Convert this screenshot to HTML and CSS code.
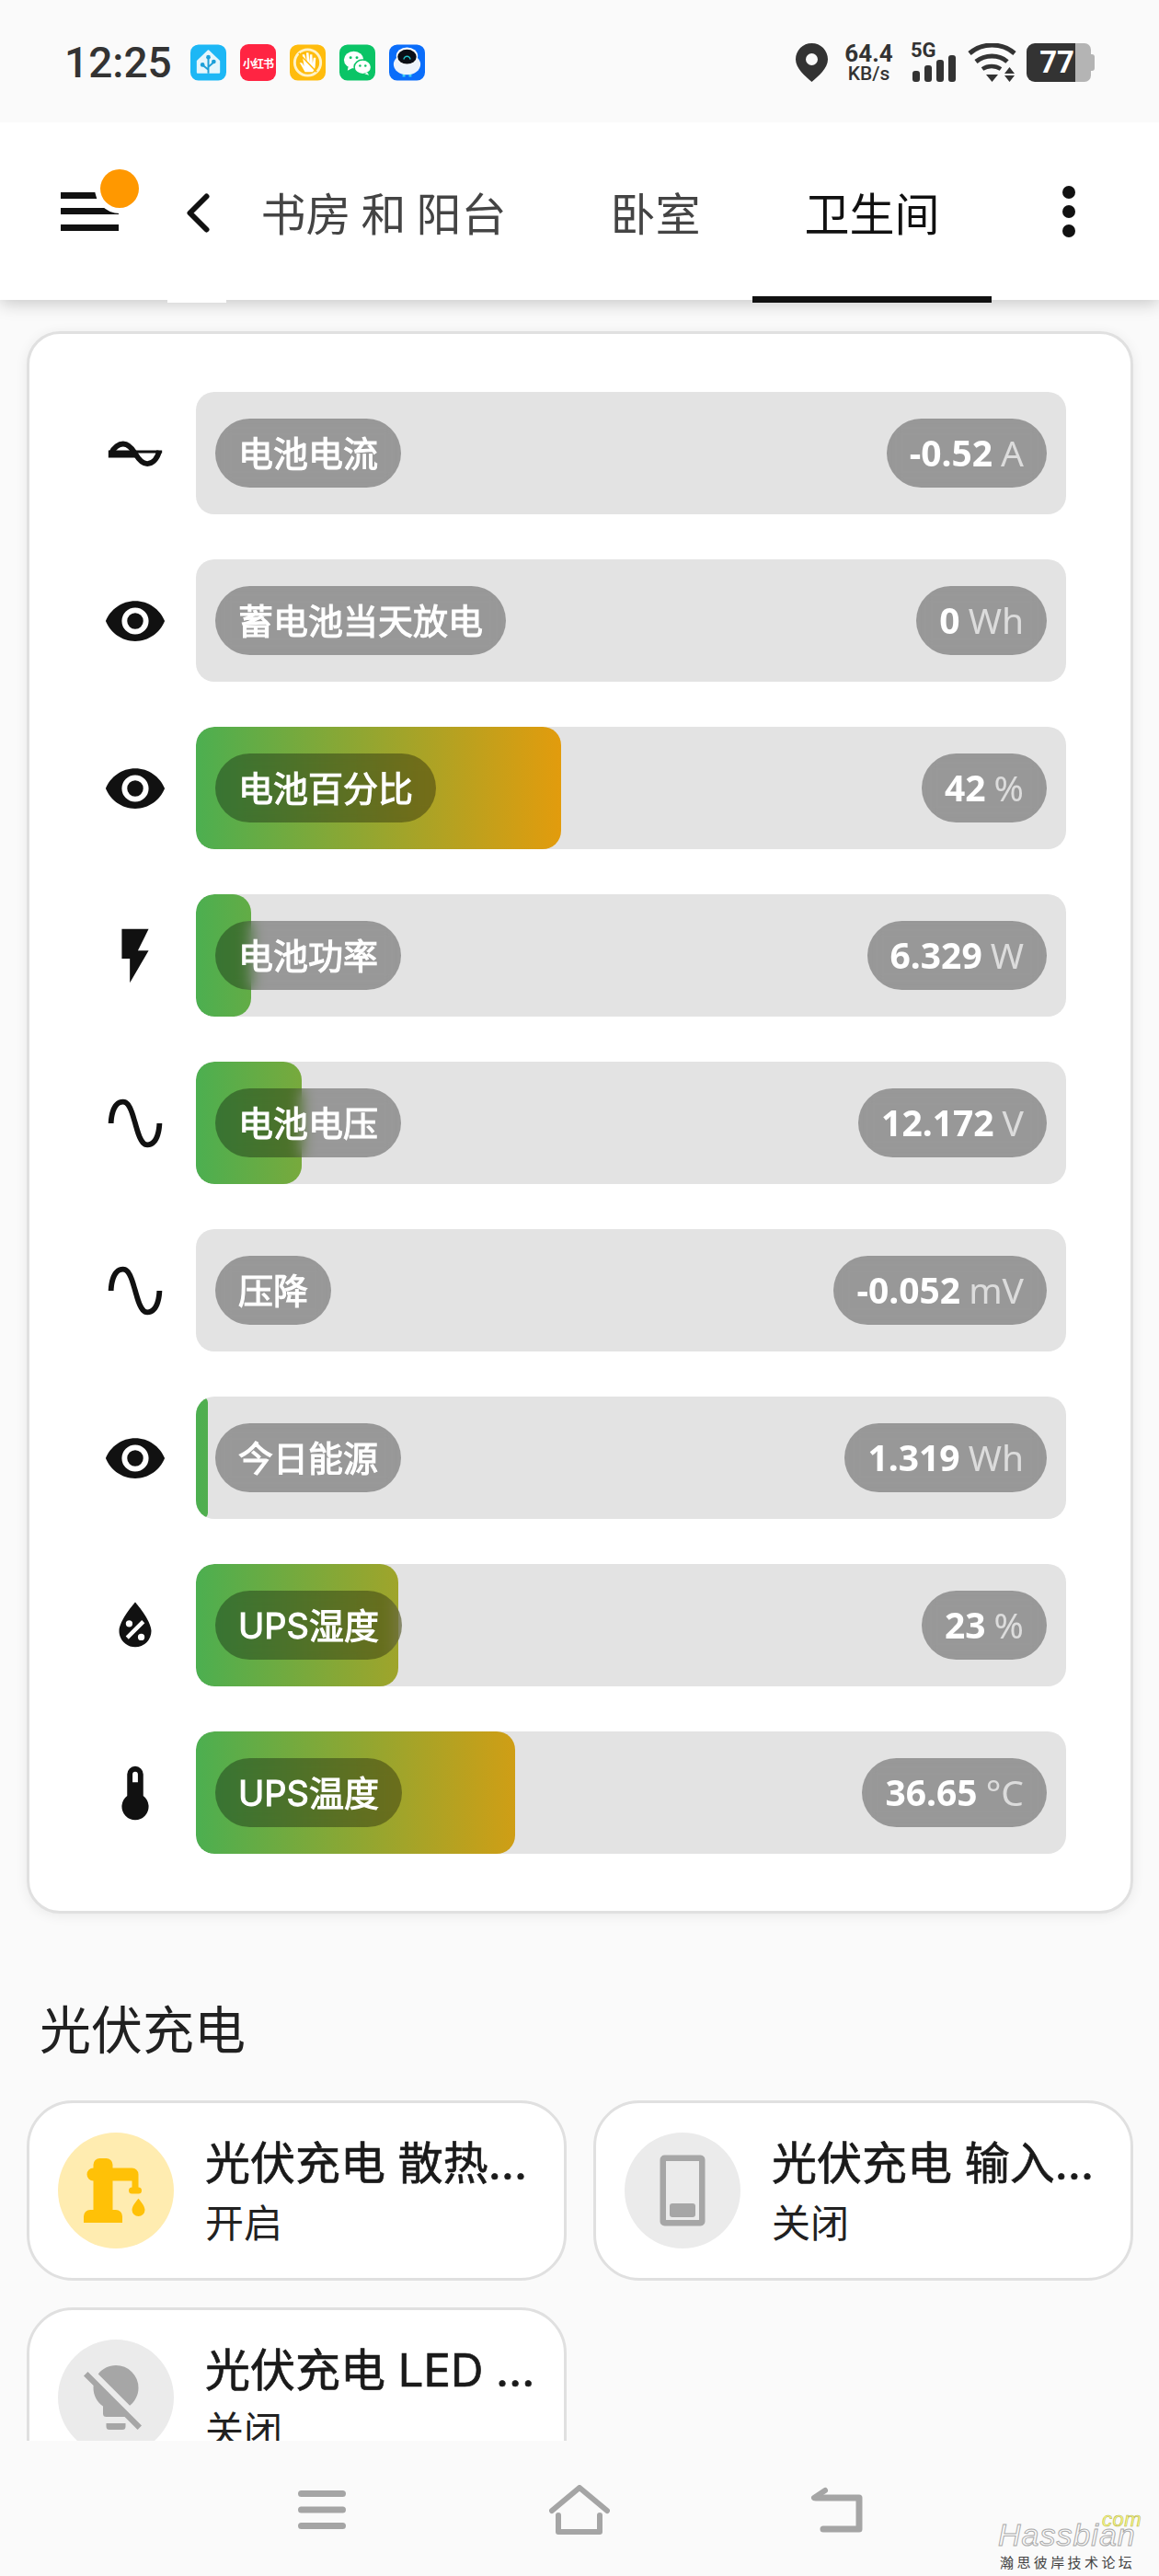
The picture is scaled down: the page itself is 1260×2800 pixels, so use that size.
FILE: index.html
```html
<!DOCTYPE html>
<html lang="zh-CN">
<head>
  <meta charset="UTF-8" />
  <title>卫生间</title>
  <link rel="stylesheet" href="styles.css">
</head>
<body>
  <div class="status-bar">
    <div class="status-left">
      <span class="clock">12:25</span>
      <svg class="app-icon" viewBox="0 0 40 40"><rect width="40" height="40" rx="9" fill="#1db7f5"/><path d="M20 7L32 18.500V31H8V18.500Z" fill="#e6f6fc" stroke="#e6f6fc" stroke-width="2" stroke-linejoin="round"/><path d="M20 14V32M20 25l5.500-5M20 28l-6-5" stroke="#1c9fd8" stroke-width="2" fill="none"/><circle cx="20" cy="14" r="2.400" fill="#1c9fd8"/><circle cx="26" cy="19" r="2.400" fill="#1c9fd8"/><circle cx="13.500" cy="22.500" r="2.400" fill="#1c9fd8"/></svg>
      <span class="app-icon red-book">小红书</span>
      <svg class="app-icon" viewBox="0 0 40 40"><rect width="40" height="40" rx="9" fill="#ffbc0d"/><circle cx="20" cy="20" r="14.500" fill="none" stroke="#fff3c8" stroke-width="3"/><path d="M11 20l6 10.500h8.500c2-2 3-5 3-8l.500-8h-2.500l-1 6.500-.500-10h-2.500l-.500 9-1-11h-2.500l.500 11-2.500-9h-2.500l2 13-2-3.500z" fill="#fff"/><path d="M10 9.500L30 30.500" stroke="#ffbc0d" stroke-width="1.600"/></svg>
      <svg class="app-icon" viewBox="0 0 40 40"><rect width="40" height="40" rx="9" fill="#0ac466"/><ellipse cx="16" cy="17" rx="11" ry="9.500" fill="#fff"/><path d="M10 24l-1 5 6-3z" fill="#fff"/><ellipse cx="26" cy="25" rx="9.500" ry="8" fill="#fff" stroke="#0ac466" stroke-width="1.500"/><path d="M31 31l2 3-5-1.500z" fill="#fff"/><circle cx="12.500" cy="14.500" r="1.500" fill="#0ac466"/><circle cx="19.500" cy="14.500" r="1.500" fill="#0ac466"/><circle cx="23" cy="23.500" r="1.300" fill="#0ac466"/><circle cx="29" cy="23.500" r="1.300" fill="#0ac466"/></svg>
      <svg class="app-icon" viewBox="0 0 40 40"><rect width="40" height="40" rx="9" fill="#0a6dfa"/><path d="M15 31h3v5h-3zM22 31h3v5h-3z" fill="#3fd0f0"/><ellipse cx="20" cy="22" rx="15" ry="11.500" fill="#eef4fb"/><ellipse cx="20" cy="12.500" rx="12" ry="9.500" fill="#fff"/><ellipse cx="20" cy="13.500" rx="10.500" ry="8" fill="#0b0f17"/><path d="M16.500 16.500a3.500 3.500 0 0 1 7 0" stroke="#22c3c9" stroke-width="1.500" fill="none"/></svg>
    </div>
    <div class="status-right">
      <svg class="pin" viewBox="0 0 35 42"><path fill-rule="evenodd" d="M17.500 0C7.800 0 0 7.800 0 17.500 0 27 10 35.500 17.500 42 25 35.500 35 27 35 17.500 35 7.800 27.200 0 17.500 0zM17.500 11a6.500 6.500 0 1 1 0 13 6.500 6.500 0 0 1 0-13z" fill="#333"/></svg>
      <div class="speed"><span class="speed-num">64.4</span><span class="speed-unit">KB/s</span></div>
      <div class="signal">
        <span class="five-g">5G</span>
        <svg class="signal-bars" viewBox="0 0 47 29"><rect x="0" y="17" width="8" height="12" rx="3"/><rect x="13" y="11" width="8" height="18" rx="3"/><rect x="26" y="5" width="8" height="24" rx="3"/><rect x="39" y="0" width="8" height="29" rx="3"/></svg>
      </div>
      <svg class="wifi" viewBox="0 0 53 42"><path d="M2 11C16-1 37-1 51 11" stroke="#333" stroke-width="5" fill="none"/><path d="M9 20c10-8 25-8 34 0" stroke="#333" stroke-width="5" fill="none"/><path d="M16 28c6-4 14-4 20 0" stroke="#333" stroke-width="4.500" fill="none"/><path d="M20 34h13l-6.500 8zM40 33l5.500-7 5.500 7zM40 35h11l-5.500 7z" fill="#333"/></svg>
      <div class="battery">
        <span class="battery-level">77</span>
        <span class="battery-rest"></span>
        <span class="battery-nub"></span>
      </div>
    </div>
  </div>

  <header class="topbar">
    <div class="menu-btn">
      <span class="menu-line"></span>
      <span class="menu-line"></span>
      <span class="menu-line"></span>
      <span class="menu-badge"></span>
    </div>
    <svg class="chevron" viewBox="0 0 25 43"><path d="M21.500 3.500L3.500 21.500 21.500 39.500" stroke="#111" stroke-width="6" stroke-linecap="round" stroke-linejoin="round" fill="none"/></svg>
    <nav class="tabs">
      <span class="tab">书房 和 阳台</span>
      <span class="tab">卧室</span>
      <span class="tab active">卫生间</span>
    </nav>
    <div class="more"><span></span><span></span><span></span></div>
    <span class="tab-sliver"></span>
  </header>

  <main class="content">
    <section class="bar-card">
      <div class="row">
        <svg class="row-icon" viewBox="0 0 24 24"><path d="M3 12C4 9.500 6 8.400 7.500 8.400 9.500 8.400 10.900 10.200 12 12 13 13.700 14.500 15.800 16.500 15.800 18.500 15.800 20.200 14 21 11" stroke="#111" stroke-width="2" fill="none"/><path d="M2 10.800H12V13.500H2ZM12 10.800H22V11.800H12Z"/></svg>
        <div class="bar">
          <span class="pill">电池电流</span>
          <span class="pill value"><b>-0.52</b><i>A</i></span>
        </div>
      </div>
      <div class="row">
        <svg class="row-icon" viewBox="0 0 24 24"><path d="M12,9A3,3 0 0,0 9,12A3,3 0 0,0 12,15A3,3 0 0,0 15,12A3,3 0 0,0 12,9M12,17A5,5 0 0,1 7,12A5,5 0 0,1 12,7A5,5 0 0,1 17,12A5,5 0 0,1 12,17M12,4.500C7,4.500 2.730,7.610 1,12C2.730,16.390 7,19.500 12,19.500C17,19.500 21.270,16.390 23,12C21.270,7.610 17,4.500 12,4.500Z"/></svg>
        <div class="bar">
          <span class="pill">蓄电池当天放电</span>
          <span class="pill value"><b>0</b><i>Wh</i></span>
        </div>
      </div>
      <div class="row">
        <svg class="row-icon" viewBox="0 0 24 24"><path d="M12,9A3,3 0 0,0 9,12A3,3 0 0,0 12,15A3,3 0 0,0 15,12A3,3 0 0,0 12,9M12,17A5,5 0 0,1 7,12A5,5 0 0,1 12,7A5,5 0 0,1 17,12A5,5 0 0,1 12,17M12,4.500C7,4.500 2.730,7.610 1,12C2.730,16.390 7,19.500 12,19.500C17,19.500 21.270,16.390 23,12C21.270,7.610 17,4.500 12,4.500Z"/></svg>
        <div class="bar">
          <span class="fill" style="width: 397px"></span>
          <span class="pill">电池百分比</span>
          <span class="pill value"><b>42</b><i>%</i></span>
        </div>
      </div>
      <div class="row">
        <svg class="row-icon" viewBox="0 0 24 24"><path d="M7,2V13H10V22L17,10H13L17,2H7Z"/></svg>
        <div class="bar">
          <span class="fill" style="width: 60px"></span>
          <span class="pill">电池功率</span>
          <span class="pill value"><b>6.329</b><i>W</i></span>
        </div>
      </div>
      <div class="row">
        <svg class="row-icon" viewBox="0 0 24 24"><path d="M16.500,21C13.500,21 12.310,16.760 11.050,12.280C10.140,9.040 9,5 7.500,5C4.110,5 4,11.930 4,12H2C2,11.630 2.060,3 7.500,3C10.500,3 11.710,7.250 12.970,11.740C13.830,14.800 15,19 16.500,19C19.940,19 20.030,12.070 20.030,12H22.030C22.030,12.370 21.970,21 16.500,21Z"/></svg>
        <div class="bar">
          <span class="fill" style="width: 115px"></span>
          <span class="pill">电池电压</span>
          <span class="pill value"><b>12.172</b><i>V</i></span>
        </div>
      </div>
      <div class="row">
        <svg class="row-icon" viewBox="0 0 24 24"><path d="M16.500,21C13.500,21 12.310,16.760 11.050,12.280C10.140,9.040 9,5 7.500,5C4.110,5 4,11.930 4,12H2C2,11.630 2.060,3 7.500,3C10.500,3 11.710,7.250 12.970,11.740C13.830,14.800 15,19 16.500,19C19.940,19 20.030,12.070 20.030,12H22.030C22.030,12.370 21.970,21 16.500,21Z"/></svg>
        <div class="bar">
          <span class="pill">压降</span>
          <span class="pill value"><b>-0.052</b><i>mV</i></span>
        </div>
      </div>
      <div class="row">
        <svg class="row-icon" viewBox="0 0 24 24"><path d="M12,9A3,3 0 0,0 9,12A3,3 0 0,0 12,15A3,3 0 0,0 15,12A3,3 0 0,0 12,9M12,17A5,5 0 0,1 7,12A5,5 0 0,1 12,7A5,5 0 0,1 17,12A5,5 0 0,1 12,17M12,4.500C7,4.500 2.730,7.610 1,12C2.730,16.390 7,19.500 12,19.500C17,19.500 21.270,16.390 23,12C21.270,7.610 17,4.500 12,4.500Z"/></svg>
        <div class="bar">
          <span class="fill" style="width: 13px"></span>
          <span class="pill">今日能源</span>
          <span class="pill value"><b>1.319</b><i>Wh</i></span>
        </div>
      </div>
      <div class="row">
        <svg class="row-icon" viewBox="0 0 24 24"><path d="M12,3.250C12,3.250 6,10 6,14C6,17.320 8.690,20 12,20A6,6 0 0,0 18,14C18,10 12,3.250 12,3.250M14.470,9.970L15.530,11.030L9.530,17.030L8.470,15.970M9.750,10A1.250,1.250 0 0,1 11,11.250A1.250,1.250 0 0,1 9.750,12.500A1.250,1.250 0 0,1 8.500,11.250A1.250,1.250 0 0,1 9.750,10M14.250,15A1.250,1.250 0 0,1 15.500,16.250A1.250,1.250 0 0,1 14.250,17.500A1.250,1.250 0 0,1 13,16.250A1.250,1.250 0 0,1 14.250,15Z"/></svg>
        <div class="bar">
          <span class="fill" style="width: 220px"></span>
          <span class="pill">UPS湿度</span>
          <span class="pill value"><b>23</b><i>%</i></span>
        </div>
      </div>
      <div class="row">
        <svg class="row-icon" viewBox="0 0 24 24"><path d="M15 13V5A3 3 0 0 0 9 5V13A5 5 0 1 0 15 13M12 4A1 1 0 0 1 13 5V8H11V5A1 1 0 0 1 12 4Z"/></svg>
        <div class="bar">
          <span class="fill" style="width: 347px"></span>
          <span class="pill">UPS温度</span>
          <span class="pill value"><b>36.65</b><i>°C</i></span>
        </div>
      </div>
    </section>

    <h2 class="section-title">光伏充电</h2>
    <div class="tiles">
      <div class="tile">
        <div class="tile-icon on">
          <svg viewBox="0 0 24 24"><path d="M19,14.500C19,14.500 21,16.670 21,18A2,2 0 0,1 19,20A2,2 0 0,1 17,18C17,16.670 19,14.500 19,14.500M5,18V9A2,2 0 0,1 3,7A2,2 0 0,1 5,5V4A2,2 0 0,1 7,2H9A2,2 0 0,1 11,4V5H17A2,2 0 0,1 19,7V9L19,11A1,1 0 0,1 20,12A1,1 0 0,1 19,13H17A1,1 0 0,1 16,12A1,1 0 0,1 17,11V9H11V18H12A2,2 0 0,1 14,20V22H2V20A2,2 0 0,1 4,18H5Z"/></svg>
        </div>
        <div class="tile-text">
          <div class="tile-name">光伏充电 散热风扇开关</div>
          <div class="tile-state">开启</div>
        </div>
      </div>
      <div class="tile">
        <div class="tile-icon">
          <svg viewBox="0 0 84 84"><path fill-rule="evenodd" d="M22.500 3.500h39a5 5 0 0 1 5 5v67a5 5 0 0 1-5 5h-39a5 5 0 0 1-5-5v-67a5 5 0 0 1 5-5zM24 10v64h36V10z"/><rect x="28" y="56" width="28" height="15" rx="3"/></svg>
        </div>
        <div class="tile-text">
          <div class="tile-name">光伏充电 输入电源开关</div>
          <div class="tile-state">关闭</div>
        </div>
      </div>
      <div class="tile">
        <div class="tile-icon">
          <svg viewBox="0 0 24 24"><path d="M12,2C9.760,2 7.780,3.050 6.500,4.680L16.310,14.500C17.940,13.210 19,11.240 19,9A7,7 0 0,0 12,2M3.280,4L2,5.270L5.040,8.300C5,8.530 5,8.760 5,9C5,11.380 6.190,13.470 8,14.740V17A1,1 0 0,0 9,18H14.730L18.730,22L20,20.720L3.280,4M9,20V21A1,1 0 0,0 10,22H14A1,1 0 0,0 15,21V20H9Z"/></svg>
        </div>
        <div class="tile-text">
          <div class="tile-name">光伏充电 LED 指示灯开关</div>
          <div class="tile-state">关闭</div>
        </div>
      </div>
    </div>
  </main>

  <footer class="nav-bar">
    <svg class="nav-menu" viewBox="0 0 52 42"><path d="M3.500 3.500H48.500M3.500 21H48.500M3.500 38.500H48.500" stroke="#a5a5a5" stroke-width="7" stroke-linecap="round"/></svg>
    <svg class="nav-home" viewBox="0 0 66 54"><path d="M3 28L33 3 63 28" stroke="#a5a5a5" stroke-width="6" stroke-linecap="round" stroke-linejoin="round" fill="none"/><path d="M10 33V51H55V33" stroke="#a5a5a5" stroke-width="6" stroke-linecap="round" stroke-linejoin="round" fill="none"/></svg>
    <svg class="nav-back" viewBox="0 0 58 50"><path d="M6 12H53V46H14" stroke="#a5a5a5" stroke-width="7" stroke-linecap="round" stroke-linejoin="round" fill="none"/><path d="M4 12L16 4" stroke="#a5a5a5" stroke-width="6" stroke-linecap="round"/></svg>
    <div class="watermark">
      <span class="wm-name">Hassbian</span>
      <span class="wm-com">com</span>
      <span class="wm-sub">瀚思彼岸技术论坛</span>
    </div>
  </footer>
</body>
</html>
```

FILE: styles.css
```css
* {
  box-sizing: border-box;
}
body {
  margin: 0;
  width: 1260px;
  height: 2800px;
  display: flex;
  flex-direction: column;
  overflow: hidden;
  font-family: Inter, "Noto Sans CJK SC", sans-serif;
  background-color: #fafafa;
  color: #212121;
}

/* status bar */
.status-bar {
  height: 133px;
  flex: none;
  position: relative;
  z-index: 3;
  padding: 47px 70px 0 70px;
  display: flex;
  justify-content: space-between;
  align-items: flex-start;
  background-color: #fafafa;
  color: #333;
}
.status-left {
  display: flex;
  align-items: center;
  gap: 15px;
  height: 42px;
}
.clock {
  font-family: Roboto, sans-serif;
  font-size: 46px;
  font-weight: 500;
  margin-right: 7px;
  line-height: 42px;
  width: 115px;
}
.app-icon {
  width: 39px;
  height: 40px;
  flex: none;
}
.red-book {
  border-radius: 9px;
  background-color: #ff2442;
  color: white;
  font-size: 12px;
  letter-spacing: -1px;
  font-weight: 700;
  display: flex;
  align-items: center;
  justify-content: center;
  white-space: nowrap;
  font-family: "Noto Sans CJK SC", sans-serif;
}
.status-right {
  display: flex;
  align-items: flex-start;
  height: 42px;
}
.pin {
  width: 35px;
  height: 42px;
  margin-right: 18px;
}
.speed {
  width: 53px;
  display: flex;
  flex-direction: column;
  align-items: center;
  font-family: Roboto, sans-serif;
  font-weight: 700;
  margin-right: 19px;
}
.speed-num {
  font-size: 26px;
  line-height: 22px;
}
.speed-unit {
  font-size: 21px;
  line-height: 22px;
  font-weight: 500;
}
.signal {
  width: 49px;
  height: 42px;
  position: relative;
  margin-right: 13px;
}
.five-g {
  position: absolute;
  left: 0;
  top: -2px;
  font-family: Roboto, sans-serif;
  font-size: 22px;
  font-weight: 700;
  line-height: 20px;
}
.signal-bars {
  position: absolute;
  left: 2px;
  top: 13px;
  width: 47px;
  height: 29px;
  fill: #333;
}
.wifi {
  width: 53px;
  height: 42px;
  margin-right: 11px;
}
.battery {
  width: 74px;
  height: 42px;
  display: flex;
  align-items: center;
}
.battery-level {
  width: 53px;
  height: 42px;
  background-color: #333;
  border-radius: 9px 0 0 9px;
  color: white;
  font-family: Roboto, sans-serif;
  font-size: 33px;
  font-weight: 700;
  line-height: 42px;
  text-align: right;
  padding-right: 1px;
}
.battery-rest {
  width: 17px;
  height: 42px;
  background-color: #b4b4b4;
  border-radius: 0 7px 7px 0;
}
.battery-nub {
  width: 4px;
  height: 18px;
  background-color: #b4b4b4;
  border-radius: 0 3px 3px 0;
}

/* app header */
.topbar {
  height: 193px;
  flex: none;
  position: relative;
  z-index: 2;
  display: flex;
  align-items: center;
  padding-left: 66px;
  background-color: white;
  box-shadow: 0 3px 18px rgba(0, 0, 0, 0.22);
}
.menu-btn {
  position: relative;
  width: 63px;
  height: 42px;
  display: flex;
  flex-direction: column;
  justify-content: space-between;
}
.menu-line {
  height: 7px;
  background-color: #111;
}
.menu-badge {
  position: absolute;
  left: 43px;
  top: -25px;
  width: 42px;
  height: 42px;
  border-radius: 50%;
  background-color: #ff9800;
  box-shadow: 0 0 0 6px white;
}
.chevron {
  width: 25px;
  height: 43px;
  margin-left: 74px;
  margin-top: 4px;
}
.tabs {
  display: flex;
  align-self: stretch;
  margin-left: -1px;
  font-family: "Noto Sans CJK SC", sans-serif;
  font-size: 49px;
  color: #444;
}
.tab {
  padding: 0 56.500px;
  display: flex;
  align-items: center;
  white-space: nowrap;
}
.tab.active {
  color: #111;
  position: relative;
}
.tab.active::after {
  content: "";
  position: absolute;
  left: 0;
  right: 0;
  bottom: -3px;
  height: 7px;
  background-color: #111;
}
.more {
  position: absolute;
  left: 1155px;
  top: 69px;
  display: flex;
  flex-direction: column;
  gap: 7px;
}
.more span {
  width: 14px;
  height: 14px;
  border-radius: 50%;
  background-color: #111;
}
.tab-sliver {
  position: absolute;
  left: 182px;
  bottom: -3px;
  width: 64px;
  height: 3px;
  background-color: white;
}

/* scrolling part */
.content {
  flex: 1;
  min-height: 0;
  overflow: hidden;
  padding: 34px 28px 0 29px;
}
.bar-card {
  height: 1720px;
  padding: 63px 70px 0 80px;
  display: flex;
  flex-direction: column;
  gap: 49px;
  background-color: white;
  border: 3px solid #e0e0e0;
  border-radius: 36px;
  box-shadow: 0 2px 14px rgba(0, 0, 0, 0.07);
}
.row {
  display: flex;
  align-items: center;
  gap: 31px;
}
.row-icon {
  width: 70px;
  height: 70px;
  flex: none;
  fill: #111;
}
.bar {
  position: relative;
  flex: 1;
  height: 133px;
  padding: 0 21px;
  display: flex;
  align-items: center;
  justify-content: space-between;
  background-color: #e3e3e3;
  border-radius: 20px;
  overflow: hidden;
}
.fill {
  position: absolute;
  left: 0;
  top: 0;
  bottom: 0;
  border-radius: 20px;
  background-image: linear-gradient(90deg, #4caf50 0, #ff9800 473px, #f44336 946px);
  background-size: 946px 100%;
  background-repeat: no-repeat;
}
.pill {
  position: relative;
  height: 75px;
  padding: 0 25px 4px;
  display: flex;
  align-items: center;
  border-radius: 38px;
  background-color: rgba(0, 0, 0, 0.33);
  backdrop-filter: blur(8px);
  color: white;
  font-size: 38px;
  font-weight: 400;
  -webkit-text-stroke: 1.100px white;
  white-space: nowrap;
}
.value {
  padding: 0 25px 3px;
  gap: 9px;
  font-family: "Noto Sans", sans-serif;
  font-size: 39px;
  -webkit-text-stroke: 0;
}
.value b {
  font-weight: 700;
}
.value i {
  font-style: normal;
  font-weight: 400;
  color: #dcdcdc;
}

.section-title {
  margin: 83px 0 0 14px;
  font-family: "Noto Sans CJK SC", sans-serif;
  font-size: 56px;
  font-weight: 400;
  line-height: 80px;
  color: #212121;
}
.tiles {
  margin-top: 40px;
  display: grid;
  grid-template-columns: 587px 587px;
  gap: 29px;
}
.tile {
  height: 196px;
  padding: 0 30px 0 31px;
  display: flex;
  align-items: center;
  gap: 34px;
  background-color: white;
  border: 3px solid #e0e0e0;
  border-radius: 50px;
}
.tile-icon {
  width: 126px;
  height: 126px;
  flex: none;
  border-radius: 50%;
  background-color: #ebebeb;
  display: flex;
  align-items: center;
  justify-content: center;
}
.tile-icon svg {
  width: 84px;
  height: 84px;
  fill: #a6a6a6;
}
.tile-icon.on {
  background-color: #ffecb0;
}
.tile-icon.on svg {
  fill: #ffc107;
}
.tile-text {
  min-width: 0;
  flex: 1;
}
.tile-name {
  font-size: 49px;
  font-weight: 400;
  -webkit-text-stroke: 0.700px #1a1a1a;
  line-height: 66px;
  color: #1a1a1a;
  overflow: hidden;
  white-space: nowrap;
  text-overflow: ellipsis;
}
.tile-state {
  font-family: "Noto Sans CJK SC", sans-serif;
  font-size: 42px;
  line-height: 58px;
  color: #212121;
}

/* system nav */
.nav-bar {
  height: 147px;
  flex: none;
  position: relative;
  z-index: 3;
  display: flex;
  background-color: #fafafa;
}
.nav-menu {
  position: absolute;
  left: 324px;
  top: 54px;
  width: 52px;
  height: 42px;
}
.nav-home {
  position: absolute;
  left: 597px;
  top: 48px;
  width: 66px;
  height: 54px;
}
.nav-back {
  position: absolute;
  left: 881px;
  top: 50px;
  width: 58px;
  height: 50px;
}
.watermark {
  position: absolute;
  left: 1085px;
  top: 79px;
  width: 155px;
  height: 62px;
  font-family: "Liberation Sans", sans-serif;
}
.wm-name {
  position: absolute;
  left: 0;
  top: 11px;
  font-size: 34px;
  font-style: italic;
  line-height: 24px;
  letter-spacing: 1px;
  color: #fafafa;
  -webkit-text-stroke: 1px #aaa;
  white-space: nowrap;
}
.wm-com {
  position: absolute;
  left: 113px;
  top: 3px;
  font-size: 22px;
  line-height: 8px;
  font-style: italic;
  letter-spacing: 0.500px;
  color: #ffff80;
  -webkit-text-stroke: 0.600px #b5b45a;
}
.wm-sub {
  position: absolute;
  left: 2px;
  top: 44px;
  font-family: "Noto Sans CJK SC", sans-serif;
  font-size: 15px;
  line-height: 18px;
  letter-spacing: 3.400px;
  color: #444;
  white-space: nowrap;
}
```
